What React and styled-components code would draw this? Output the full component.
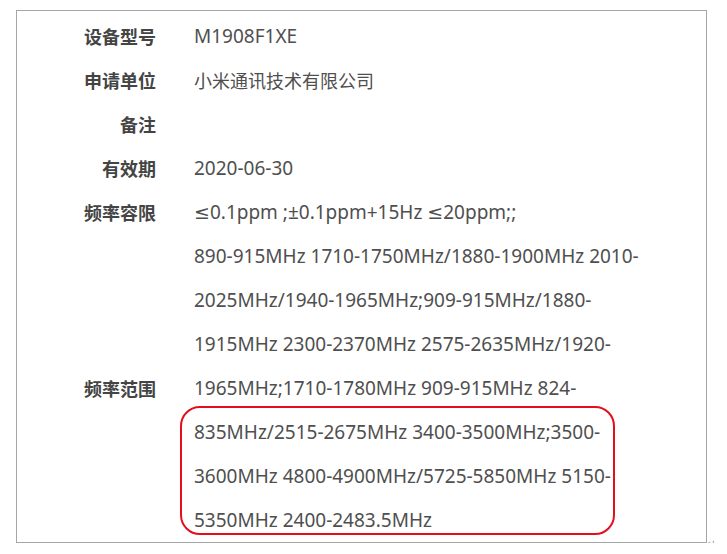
import styled, { createGlobalStyle } from 'styled-components';

const GlobalStyle = createGlobalStyle`
    body {
        margin: 0;
        background: #ffffff;
        font-family: "Noto Sans", "DejaVu Sans", "Noto Sans CJK SC", sans-serif;
    }
`

const Page = styled.div`
    padding: 10px 0 0 16px;
`

const Frame = styled.div`
    position: relative;
    width: 689px;
    border: 1px solid #a6a6a6;
    padding-top: 3px;
`

const Row = styled.div`
    display: grid;
    grid-template-columns: 139px 1fr;
    column-gap: 38px;
`

const Label = styled.div`
    align-self: center;
    text-align: right;
    font-family: "Noto Sans CJK SC", sans-serif;
    font-weight: 700;
    font-size: 18px;
    color: #444444;
    line-height: 44px;
`

const Value = styled.div`
    min-height: 44px;
`

const Line = styled.div`
    font-size: ${p => p.$cjk ? '18px' : '19px'};
    line-height: 44px;
    color: #4f4f4f;
    white-space: nowrap;
    font-family: ${p => p.$cjk ? '"Noto Sans CJK SC", sans-serif' : '"Noto Sans", "DejaVu Sans", "Noto Sans CJK SC", sans-serif'};
`

const Highlight = styled.div`
    position: absolute;
    left: 163px;
    top: 395px;
    width: 431px;
    height: 125px;
    border: 2px solid #e3101c;
    border-radius: 20px;
    pointer-events: none;
`

const ReturnMark = styled.span`
    position: absolute;
    left: 100%;
    bottom: -7px;
    margin-left: 1px;
    font-size: 10px;
    color: #9a9a9a;
    font-family: "DejaVu Sans", sans-serif;
`

const rows = [
    { label: '设备型号', lines: ['M1908F1XE'] },
    { label: '申请单位', lines: ['小米通讯技术有限公司'], cjk: true },
    { label: '备注', lines: [] },
    { label: '有效期', lines: ['2020-06-30'] },
    { label: '频率容限', lines: ['≤0.1ppm ;±0.1ppm+15Hz ≤20ppm;;'] },
    {
        label: '频率范围',
        lines: [
            '890-915MHz 1710-1750MHz/1880-1900MHz 2010-',
            '2025MHz/1940-1965MHz;909-915MHz/1880-',
            '1915MHz 2300-2370MHz 2575-2635MHz/1920-',
            '1965MHz;1710-1780MHz 909-915MHz 824-',
            '835MHz/2515-2675MHz 3400-3500MHz;3500-',
            '3600MHz 4800-4900MHz/5725-5850MHz 5150-',
            '5350MHz 2400-2483.5MHz',
        ],
    },
]

export default function App() {
    return (
        <Page>
            <GlobalStyle />
            <Frame>
                {rows.map(row => (
                    <Row key={row.label}>
                        <Label>{row.label}</Label>
                        <Value>
                            {row.lines.map(line => (
                                <Line key={line} $cjk={row.cjk}>{line}</Line>
                            ))}
                        </Value>
                    </Row>
                ))}
                <Highlight />
                <ReturnMark>↵</ReturnMark>
            </Frame>
        </Page>
    )
}
